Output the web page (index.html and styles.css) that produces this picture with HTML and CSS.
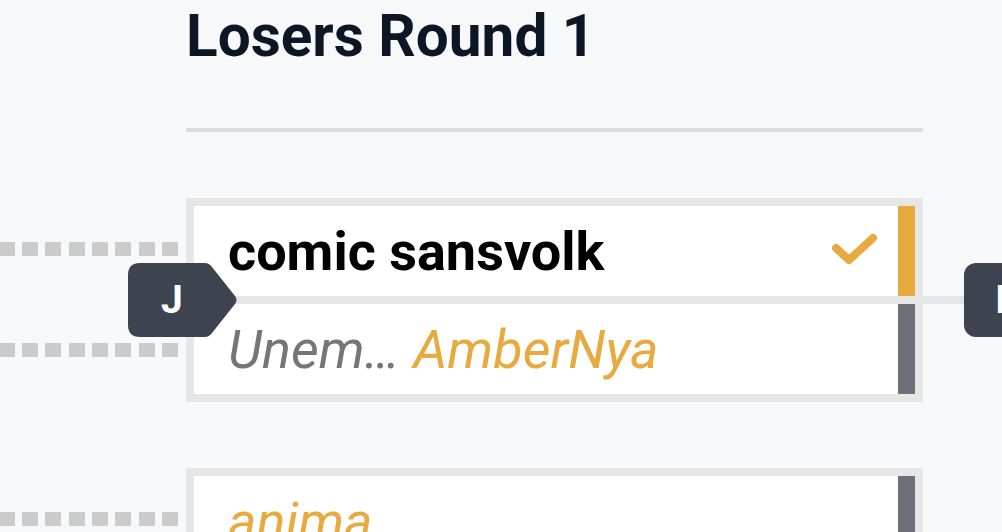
FILE: index.html
```html
<!DOCTYPE html>
<html lang="en">
<head>
<meta charset="utf-8">
<title>Losers Round 1</title>
<link rel="stylesheet" href="styles.css">
</head>
<body>
<div class="round">
  <h1 class="round-title">Losers Round 1</h1>
  <div class="round-divider"></div>
  <div class="matches">
    <div class="match">
      <div class="feed feed-top"></div>
      <div class="feed feed-bottom"></div>
      <div class="badge badge-left">
        <svg class="badge-shape" width="110" height="74" viewBox="0 0 110 74"><path d="M12 0 H77 Q81 0 84 4 L107 33 Q110 37 107 41 L84 70 Q81 74 77 74 H12 Q0 74 0 62 V12 Q0 0 12 0 Z" fill="#3d434f"/></svg>
        <span class="badge-label">J</span>
      </div>
      <div class="connector"></div>
      <div class="badge badge-right">
        <span class="badge-label">K</span>
      </div>
      <div class="slot winner">
        <span class="name name-bold">comic sansvolk</span>
        <svg class="check" width="50" height="40" viewBox="0 0 50 40"><polyline points="6,17 19,29 43,7" fill="none" stroke="#e8a93e" stroke-width="8" stroke-linecap="round" stroke-linejoin="round"/></svg>
        <span class="bar bar-win"></span>
      </div>
      <div class="slot">
        <span class="name name-italic"><span class="muted">Unem…</span> <span class="accent">AmberNya</span></span>
        <span class="bar bar-lose"></span>
      </div>
    </div>
    <div class="match">
      <div class="feed feed-top"></div>
      <div class="slot">
        <span class="name name-italic"><span class="accent">anima</span></span>
        <span class="bar bar-lose"></span>
      </div>
      <div class="slot">
        <span class="name name-italic"><span class="accent">&nbsp;</span></span>
        <span class="bar bar-lose"></span>
      </div>
    </div>
  </div>
</div>
</body>
</html>
```

FILE: styles.css
```css
html, body {
  margin: 0;
  padding: 0;
}
body {
  background: #f7f8fa;
  font-family: Roboto, "Liberation Sans", sans-serif;
  width: 1002px;
  height: 532px;
  overflow: hidden;
}
.round {
  margin-left: 186px;
  width: 737px;
}
.round-title {
  margin: 0;
  padding-top: 8px;
  font-size: 58.5px;
  line-height: 57px;
  font-weight: 700;
  color: #0c1624;
  height: 128px;
  box-sizing: border-box;
}
.round-divider {
  height: 4px;
  background: #dcdde2;
}
.matches {
  display: flex;
  flex-direction: column;
  gap: 66px;
  padding-top: 66px;
}
.match {
  position: relative;
  border: 8px solid #e6e6e6;
  background: #ffffff;
}
.slot {
  height: 90px;
  display: flex;
  align-items: center;
  padding-left: 34px;
  position: relative;
}
.slot + .slot {
  border-top: 8px solid #e6e6e6;
}
.name {
  flex: 1;
  font-size: 54px;
  white-space: nowrap;
}
.name-bold {
  font-weight: 700;
  color: #000000;
}
.name-italic {
  font-style: italic;
}
.muted {
  color: #767676;
}
.accent {
  color: #e8a93e;
}
.check {
  margin-right: 18px;
}
.bar {
  align-self: stretch;
  width: 17px;
}
.bar-win {
  background: #e8a93e;
}
.bar-lose {
  background: #6b7079;
}
.feed {
  position: absolute;
  left: -194px;
  width: 178px;
  height: 14px;
  background: repeating-linear-gradient(to left, #cbcbcb 0 16px, transparent 16px 23.3px);
}
.feed-top {
  top: 36px;
}
.feed-bottom {
  top: 137px;
}
.badge {
  position: absolute;
  top: 57px;
  height: 74px;
  z-index: 2;
}
.badge-left {
  left: -66px;
  width: 110px;
}
.badge-shape {
  position: absolute;
  left: 0;
  top: 0;
}
.badge-label {
  position: relative;
  display: block;
  width: 88px;
  text-align: center;
  line-height: 74px;
  font-size: 39px;
  font-weight: 700;
  color: #ffffff;
}
.badge-right {
  left: 770px;
  width: 110px;
  background: #3d434f;
  border-radius: 12px;
}
.connector {
  position: absolute;
  left: 721px;
  top: 90px;
  width: 60px;
  height: 8px;
  background: #e6e6e6;
}
```
